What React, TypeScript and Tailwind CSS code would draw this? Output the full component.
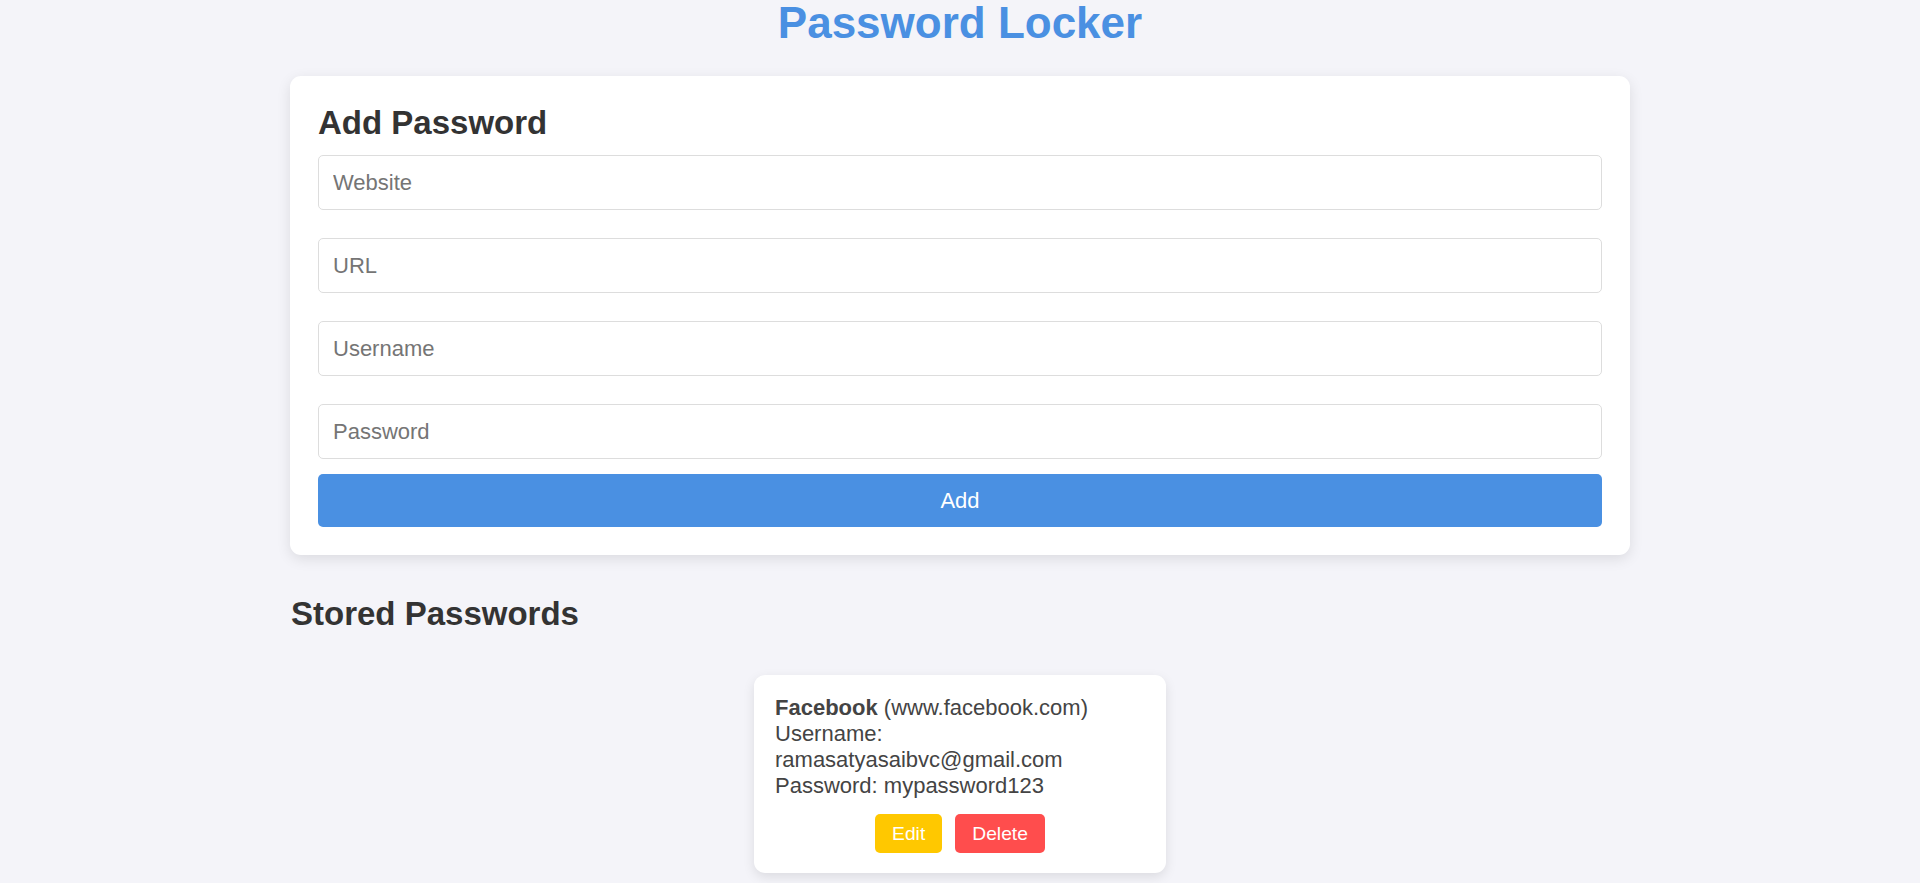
import React from "react";

export default function App() {
  const font = "font-['Liberation_Sans',Arial,sans-serif]";
  const inputCls =
    "block w-full h-[55px] box-border rounded-[5px] border border-[#dddddd] bg-white px-[14px] text-[22px] leading-[normal] text-[#333] placeholder:text-[#757575] outline-none";
  return (
    <div className={`min-h-[883px] w-full bg-[#f4f4f9] ${font} text-[#333]`}>
      <h1 className="pt-px text-center text-[44px] font-bold leading-none text-[#4a90e2]">
        Password Locker
      </h1>
      <div className="mx-auto mt-[31px] w-[1340px]">
        <div className="rounded-[11px] bg-white p-[28px] shadow-[0_4px_14px_rgba(0,0,0,0.1)]">
          <h2 className="text-[33px] font-bold leading-[normal] text-[#333]">Add Password</h2>
          <div className="mt-[13px] flex flex-col gap-[28px]">
            <input className={inputCls} placeholder="Website" />
            <input className={inputCls} placeholder="URL" />
            <input className={inputCls} placeholder="Username" />
            <input className={inputCls} placeholder="Password" type="password" />
          </div>
          <button className="mt-[15px] block h-[53px] w-full rounded-[5px] bg-[#4a90e2] text-[22px] leading-[normal] text-white">
            Add
          </button>
        </div>
        <h2 className="mt-[40px] pl-px text-[33px] font-bold leading-[normal] text-[#333]">
          Stored Passwords
        </h2>
        <div className="mt-[42px] flex justify-center">
          <div className="w-[412px] rounded-[11px] bg-white px-[21px] pt-[20px] pb-[20px] text-[22px] leading-[normal] text-[#444] shadow-[0_4px_12px_rgba(0,0,0,0.1)]">
            <div>
              <span className="font-bold">Facebook</span> (www.facebook.com)
            </div>
            <div>Username: ramasatyasaibvc@gmail.com</div>
            <div>Password: mypassword123</div>
            <div className="mt-[15px] flex justify-center gap-[13px]">
              <button className="h-[39px] rounded-[5px] bg-[#ffc800] px-[17px] text-[19.25px] leading-[normal] text-white">
                Edit
              </button>
              <button className="h-[39px] rounded-[5px] bg-[#ff4d4d] px-[17px] text-[19.25px] leading-[normal] text-white">
                Delete
              </button>
            </div>
          </div>
        </div>
      </div>
    </div>
  );
}
